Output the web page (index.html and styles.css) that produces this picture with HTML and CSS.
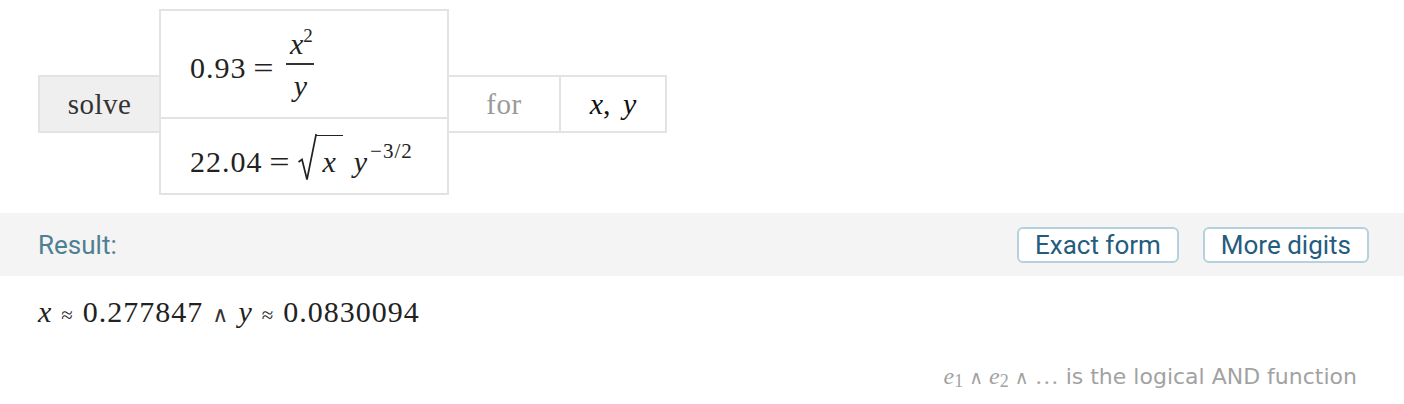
FILE: index.html
```html
<!DOCTYPE html>
<html>
<head>
<meta charset="utf-8">
<link rel="stylesheet" href="styles.css">
</head>
<body>
<div class="input">
  <div class="cell solve"><span>solve</span></div>
  <div class="eqs">
    <div class="cell eq eq1">
      <span class="line1"><span class="num-text">0.93</span><span class="op">=</span><span class="frac"><span class="numer"><i>x</i><sup class="sup2">2</sup></span><span class="bar"></span><span class="denom"><i>y</i></span></span></span>
    </div>
    <div class="cell eq eq2">
      <span class="line2"><span class="num-text">22.04</span><span class="op">=</span><span class="sqrt"><svg class="radical" width="19" height="48" viewBox="0 0 19 48"><path d="M0.5 29 L4 26.5 L9 46.5 L18.2 1" fill="none" stroke="#222" stroke-width="1.7" stroke-linejoin="miter"/></svg><span class="radicand"><i>x</i></span></span><i class="ylet">y</i><sup class="sup-exp">−3/2</sup></span>
    </div>
  </div>
  <div class="cell for"><span>for</span></div>
  <div class="cell vars"><span><i>x</i>, <i>y</i></span></div>
</div>

<div class="result-bar">
  <span class="result-label">Result:</span>
  <div class="buttons">
    <button class="btn">Exact form</button>
    <button class="btn">More digits</button>
  </div>
</div>

<div class="result"><i>x</i> <span class="approx">≈</span> 0.277847 <span class="and">∧</span> <i>y</i> <span class="approx">≈</span> 0.0830094</div>

<div class="note"><span class="note-math"><i>e</i><sub>1</sub> <span class="note-and">∧</span> <i>e</i><sub>2</sub> <span class="note-and">∧</span> …</span> is the logical AND function</div>
</body>
</html>
```

FILE: styles.css
```css
* { box-sizing: border-box; }
html, body { margin: 0; padding: 0; background: #fff; }
body {
  width: 1404px;
  height: 404px;
  overflow: hidden;
  font-family: "Liberation Serif", "Times New Roman", serif;
  color: #222;
}

.input {
  display: flex;
  align-items: center;
  margin: 9px 0 0 38px;
}
.cell {
  border: 2px solid #e3e3e3;
  display: flex;
  align-items: center;
  font-size: 30px;
}
.solve {
  width: 123px;
  height: 58px;
  margin-top: 4px;
  background: #efefef;
  justify-content: center;
  font-size: 29px;
  letter-spacing: 0.5px;
  color: #333;
}
.eqs {
  display: flex;
  flex-direction: column;
  width: 290px;
  margin-left: -2px;
}
.eq {
  padding-left: 29px;
  white-space: nowrap;
}
.num-text { letter-spacing: 1px; }
.eq1 { height: 110px; }
.eq2 { height: 78px; margin-top: -2px; }

.line1 {
  display: inline-flex;
  align-items: center;
  position: relative;
  top: 4px;
}
.line2 {
  display: inline-block;
  line-height: 40px;
  position: relative;
  top: 1px;
}

.op {
  display: inline-block;
  margin: 0 15px 0 8px;
  transform: scaleX(1.2);
}
.line2 .op { margin: 0 11px 0 8px; }

.frac {
  display: inline-flex;
  flex-direction: column;
  align-items: center;
  position: relative;
  top: -3px;
}
.numer { line-height: 30px; padding: 0 0 0 2px; }
.sup2 { font-size: 19px; vertical-align: 12px; margin-left: 0; line-height: 0; }
.bar { width: 28px; height: 1.6px; background: #333; margin: 4px 0 6px; }
.denom { line-height: 30px; }

.sqrt {
  display: inline-block;
  white-space: nowrap;
}
.radical {
  display: inline-block;
  vertical-align: -9px;
}
.radicand {
  display: inline-block;
  border-top: 1.7px solid #222;
  line-height: 30px;
  padding: 11px 7px 0 6px;
  margin-left: -1px;
}
.ylet { margin-left: 11px; }
.sup-exp {
  font-size: 21px;
  vertical-align: 14px;
  line-height: 0;
  margin-left: 3px;
  letter-spacing: 1px;
}

.for {
  width: 114px;
  height: 58px;
  margin-top: 4px;
  margin-left: -2px;
  justify-content: center;
  color: #9a9a9a;
  font-size: 29px;
  letter-spacing: 0.5px;
}
.vars {
  width: 108px;
  height: 58px;
  margin-top: 4px;
  margin-left: -2px;
  justify-content: center;
  color: #111;
  word-spacing: 5px;
}

.result-bar {
  margin-top: 18px;
  height: 63px;
  background: #f4f4f4;
  display: flex;
  align-items: center;
  justify-content: space-between;
  padding: 0 35px 0 38px;
}
.result-label {
  font-family: Roboto, "Liberation Sans", sans-serif;
  font-size: 26px;
  color: #4f7f93;
}
.buttons { display: flex; gap: 24px; }
.btn {
  height: 36px;
  padding: 0 16px;
  border: 2px solid #b3d2de;
  border-radius: 6px;
  background: #fff;
  font-family: Roboto, "Liberation Sans", sans-serif;
  font-size: 26px;
  color: #245c7e;
  line-height: 30px;
}

.result {
  margin: 19px 0 0 38px;
  font-size: 30px;
  line-height: 34px;
  white-space: nowrap;
  letter-spacing: 1px;
  word-spacing: 0.5px;
}
.approx { font-size: 21px; }
.and { font-family: "DejaVu Serif", serif; font-size: 22px; font-weight: 400; color: #333; }

.note {
  margin-top: 32px;
  padding-right: 47px;
  text-align: right;
  font-family: "DejaVu Sans", sans-serif;
  font-size: 22px;
  line-height: 24px;
  color: #a2a2a2;
}
.note-math { font-family: "Liberation Serif", serif; font-size: 24px; }
.note-math sub { font-size: 18px; vertical-align: -3px; }
.note-and { font-family: "DejaVu Serif", serif; font-size: 19px; }
```
